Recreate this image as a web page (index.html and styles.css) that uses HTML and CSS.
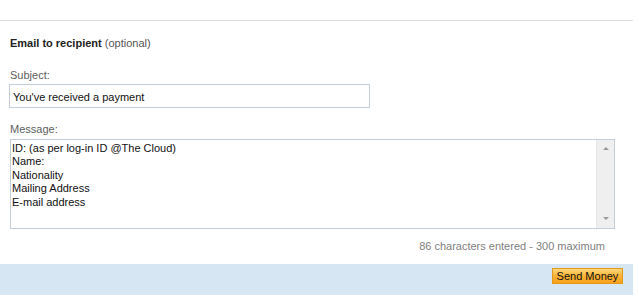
FILE: index.html
```html
<!DOCTYPE html>
<html lang="en">
<head>
    <meta charset="UTF-8">
    <meta name="viewport" content="width=device-width, initial-scale=1.0">
    <title>Send Money</title>

    <link rel="stylesheet" href="styles.css">
</head>
<body>

    <div class="page">
        <form class="email-form">

            <h2 class="section-title">Email to recipient <span>(optional)</span></h2>

            <label class="field-label" for="subject">Subject:</label>
            <input class="subject" type="text" id="subject" name="subject" value="You've received a payment">

            <label class="field-label msg-label" for="message">Message:</label>
            <div class="message-box">
                <textarea id="message" name="message">ID: (as per log-in ID @The Cloud)
Name:
Nationality
Mailing Address
E-mail address</textarea>
                <!-- fake scrollbar like the old IE one -->
                <div class="scrollbar">
                    <span class="arrow up"></span>
                    <span class="arrow down"></span>
                </div>
            </div>
            <p class="counter">86 characters entered - 300 maximum</p>

        </form>

        <div class="actions">
            <button class="send-btn" type="button">Send Money</button>
        </div>
    </div>

</body>
</html>
```

FILE: styles.css
```css
body{
    margin: 0;
    font-family: "Liberation Sans", Arial, sans-serif;
    font-size: 11px;
    color: #222;
    background: #fff;
}
.page{
    width: 633px;
    padding-top: 20px;
}
.email-form{
    border-top: 1px solid #dcdfe2;
    padding: 16px 0 0 10px;
}
.section-title{
    font-size: 11px;
    line-height: 13px;
    margin: 0 0 19px 0;
    color: #222;
}
.section-title span{
    font-weight: normal;
    color: #555;
}
.field-label{
    display: block;
    line-height: 13px;
    color: #5e5e5e;
    margin-bottom: 2px;
}
.msg-label{
    margin-top: 15px;
}
.subject{
    display: block;
    box-sizing: border-box;
    width: 361px;
    height: 24px;
    margin: 0 0 0 -1px;
    padding: 1px 3px 0 3px;
    border: 1px solid #c3ced6;
    font-family: inherit;
    font-size: 11px;
    color: #111;
    outline: none;
}
.message-box{
    display: flex;
    box-sizing: border-box;
    width: 605px;
    height: 90px;
    margin-top: 3px;
    border: 1px solid #c3ced6;
}
.message-box textarea{
    flex: 1;
    border: none;
    resize: none;
    overflow: hidden;
    padding: 2px 1px 0 1px;
    margin: 0;
    font-family: inherit;
    font-size: 11px;
    line-height: 13.4px;
    color: #111;
    outline: none;
}
.scrollbar{
    width: 17px;
    background: #efefef;
    border-left: 1px solid #e6e6e6;
    display: flex;
    flex-direction: column;
    justify-content: space-between;
    align-items: center;
    padding: 7px 0 8px 0;
}
.arrow{
    width: 0;
    height: 0;
    border-left: 3px solid transparent;
    border-right: 3px solid transparent;
}
.arrow.up{
    border-bottom: 3px solid #9a9a9a;
}
.arrow.down{
    border-top: 3px solid #9a9a9a;
}
.counter{
    width: 595px;
    margin: 11px 0 0 0;
    line-height: 13px;
    text-align: right;
    color: #808080;
}
.actions{
    margin-top: 11px;
    height: 31px;
    background: #d6e6f2;
    display: flex;
    justify-content: flex-end;
    align-items: flex-start;
    padding-right: 10px;
}
.send-btn{
    margin-top: 4px;
    height: 16px;
    width: 71px;
    padding: 0;
    border: 1px solid #e39a1c;
    background: linear-gradient(#ffd97a, #fbb236 50%, #f7a21b);
    font-family: inherit;
    font-size: 11px;
    line-height: 14px;
    color: #111;
    cursor: pointer;
}
```
